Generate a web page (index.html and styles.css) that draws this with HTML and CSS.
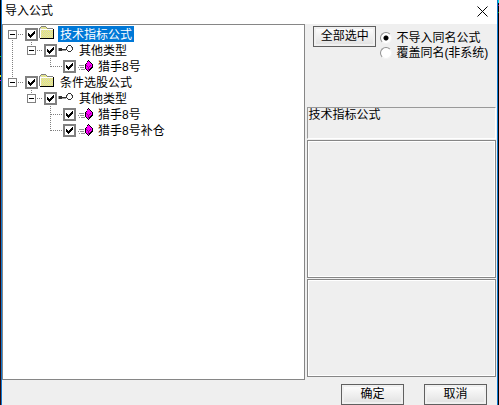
FILE: index.html
```html
<!DOCTYPE html>
<html lang="zh-CN">
<head>
    <meta charset="UTF-8">
    <meta name="viewport" content="width=device-width, initial-scale=1.0">
    <title>导入公式</title>
    <link rel="stylesheet" href="styles.css">
</head>
<body>
    <!-- Shared icons -->
    <svg class="icon-defs" width="0" height="0">
        <symbol id="icon-folder" viewBox="0 0 16 16">
            <path d="M1 2h1v-1h5v1h1v1h6v9h-13z" fill="#d0d0d0"/>
            <path d="M2 1.500h5M3 2.500h5M2 3.500h6M3 4.500h11M2 5.500h12M3 6.500h11M2 7.500h12M3 8.500h11M2 9.500h12M3 10.500h11M2 11.500h12" stroke="#f4f45a" stroke-dasharray="1 1"/>
            <path d="M2 0h5v1h-5zM1 1h1v1h-1zM7 1h1v1h-1zM0 2h1v10h-1zM8 2h6v1h-6z" fill="#808080"/>
            <path d="M1 3h13v1h-13zM1 4h1v8h-1z" fill="#fff"/>
            <path d="M14 3h1v10h-14v-1h13z" fill="#000"/>
        </symbol>
        <symbol id="icon-key" viewBox="0 0 16 16">
            <path d="M1 6h3v3h-3zM4 7h4v1h-4zM10 3h3v1h-3zM9 4h1v1h-1zM13 4h1v1h-1zM8 5h1v3h-1zM14 5h1v3h-1zM9 8h1v1h-1zM13 8h1v1h-1zM10 9h3v1h-3z" fill="#303030"/>
            <path d="M0 6h1v3h-1zM4 8h4v1h-4zM9 5h1v1h-1zM13 5h1v1h-1z" fill="#a0a0a0"/>
        </symbol>
        <symbol id="icon-formula" viewBox="0 0 16 16">
            <path d="M11 2h1v1h1v1h1v1h1v1h1v4h-1v1h-1v1h-1v1h-1v1h-1v-1h-1v-1h-1v-1h-1v-5h1v-1h1v-2h1z" fill="#000"/>
            <path d="M11 3h1v1h1v1h1v1h1v3h-1v1h-1v1h-1v2h-1v-1h-1v-1h-1v-5h1v-2h1z" fill="#ff00ff"/>
            <path d="M9 7h1v1h1v1h1v3h-1v-3h-1v-1h-1zM13 7h1v1h-1zM12 8h1v1h-1z" fill="#900090"/>
            <path d="M2 7h5v1h-5zM1 9h1v1h-1zM3 9h4v1h-4zM2 11h1v1h-1zM4 11h4v1h-4z" fill="#909090"/>
        </symbol>
    </svg>

    <header class="title-bar">
        <h1 class="title">导入公式</h1>
        <button class="close" type="button" aria-label="关闭">
            <svg width="11" height="11" viewBox="0 0 11 11"><path d="M0.500 0.500l10 10M10.500 0.500l-10 10" stroke="#000" fill="none"/></svg>
        </button>
    </header>

    <main class="content">
        <!-- Formula tree -->
        <div class="tree">
            <ul class="branch">
                <li class="node">
                    <div class="row">
                        <button class="toggle" type="button" aria-label="折叠"></button>
                        <span class="dots"></span>
                        <label class="item">
                            <input class="check" type="checkbox" checked>
                            <svg class="icon"><use href="#icon-folder"/></svg>
                            <span class="name selected">技术指标公式</span>
                        </label>
                    </div>
                    <ul class="branch">
                        <li class="node">
                            <div class="row">
                                <button class="toggle" type="button" aria-label="折叠"></button>
                                <span class="dots"></span>
                                <label class="item">
                                    <input class="check" type="checkbox" checked>
                                    <svg class="icon"><use href="#icon-key"/></svg>
                                    <span class="name">其他类型</span>
                                </label>
                            </div>
                            <ul class="branch">
                                <li class="node">
                                    <div class="row leaf">
                                        <span class="dots"></span>
                                        <label class="item">
                                            <input class="check" type="checkbox" checked>
                                            <svg class="icon"><use href="#icon-formula"/></svg>
                                            <span class="name">猎手8号</span>
                                        </label>
                                    </div>
                                </li>
                            </ul>
                        </li>
                    </ul>
                </li>
                <li class="node">
                    <div class="row">
                        <button class="toggle" type="button" aria-label="折叠"></button>
                        <span class="dots"></span>
                        <label class="item">
                            <input class="check" type="checkbox" checked>
                            <svg class="icon"><use href="#icon-folder"/></svg>
                            <span class="name">条件选股公式</span>
                        </label>
                    </div>
                    <ul class="branch">
                        <li class="node">
                            <div class="row">
                                <button class="toggle" type="button" aria-label="折叠"></button>
                                <span class="dots"></span>
                                <label class="item">
                                    <input class="check" type="checkbox" checked>
                                    <svg class="icon"><use href="#icon-key"/></svg>
                                    <span class="name">其他类型</span>
                                </label>
                            </div>
                            <ul class="branch">
                                <li class="node">
                                    <div class="row leaf">
                                        <span class="dots"></span>
                                        <label class="item">
                                            <input class="check" type="checkbox" checked>
                                            <svg class="icon"><use href="#icon-formula"/></svg>
                                            <span class="name">猎手8号</span>
                                        </label>
                                    </div>
                                </li>
                                <li class="node">
                                    <div class="row leaf">
                                        <span class="dots"></span>
                                        <label class="item">
                                            <input class="check" type="checkbox" checked>
                                            <svg class="icon"><use href="#icon-formula"/></svg>
                                            <span class="name">猎手8号补仓</span>
                                        </label>
                                    </div>
                                </li>
                            </ul>
                        </li>
                    </ul>
                </li>
            </ul>
        </div>

        <!-- Options and details -->
        <div class="side">
            <div class="options">
                <button class="btn" type="button">全部选中</button>
                <div class="radios">
                    <label class="choice"><input class="radio" type="radio" name="same-name" checked>不导入同名公式</label>
                    <label class="choice"><input class="radio" type="radio" name="same-name">覆盖同名(非系统)</label>
                </div>
            </div>
            <div class="summary">技术指标公式</div>
            <div class="pane pane-large"></div>
            <div class="pane pane-small"></div>
        </div>
    </main>

    <footer class="actions">
        <button class="btn" type="submit">确定</button>
        <button class="btn" type="button">取消</button>
    </footer>
</body>
</html>
```

FILE: styles.css
```css
*{
    box-sizing: border-box;
}
html{
    background: #000;
}
/* The window edge is blue, with the dark desktop showing beside it */
body{
    display: flex;
    flex-direction: column;
    min-height: 100vh;
    margin: 0;
    padding: 0 2px;
    background: linear-gradient(#000 56px, #00c000 56px 57px, #000 57px 75px, #e0e000 75px 77px, #000 77px 80px, #e000e0 80px 81px, #000 81px 180px, #300808 180px) left / 1px 100% no-repeat,
                linear-gradient(#00e0e0 3px, #000 3px 5px, #800080 5px 6px, #000 6px 12px, #00a000 12px 13px, #000 13px) right / 1px 100% no-repeat,
                #1078d0;
    color: #000;
    font: 12px/16px "Liberation Sans", "Noto Sans CJK SC", sans-serif;
}
button, input{
    margin: 0;
    padding: 0;
    font: inherit;
    color: inherit;
}
.icon-defs{
    position: absolute;
}
/*
* Title Bar
*/
.title-bar{
    display: flex;
    align-items: center;
    justify-content: space-between;
    height: 24px;
    padding: 0 9px 2px 3px;
    background: #fff;
}
.title{
    margin: 0;
    font-size: 12px;
    font-weight: normal;
}
.close{
    display: flex;
    border: 0;
    background: none;
}
/*
* Content
*/
.content{
    display: grid;
    grid-template-columns: 19fr 12fr;
    flex: 1;
    background: #efefef;
}
/*
* Tree
*/
.tree{
    padding: 1px 5px;
    border: 1px solid #868686;
    background: #fff;
}
.branch{
    margin: 0;
    padding: 0;
    list-style: none;
}
.branch .branch{
    padding-left: 19px;
}
.node{
    background: repeating-linear-gradient(#808080 0 1px, transparent 1px 2px) 4px 0 / 1px 100% no-repeat;
}
.node:last-child{
    background-size: 1px 9px;
}
.tree > .branch > .node:first-child{
    background-position: 4px 8px;
}
.row{
    display: flex;
    align-items: center;
    height: 16px;
}
.leaf{
    padding-left: 4px;
}
.toggle{
    width: 9px;
    height: 9px;
    border: 1px solid #808080;
    background: linear-gradient(#000, #000) center / 5px 1px no-repeat #fff;
}
.dots{
    width: 8px;
    height: 1px;
    background: repeating-linear-gradient(90deg, transparent 0 1px, #808080 1px 2px) 0 0 / 6px 1px no-repeat;
}
.leaf .dots{
    width: 13px;
    background-size: 12px 1px;
}
.item{
    display: flex;
    align-items: center;
}
.check{
    width: 13px;
    height: 13px;
    border: 2px solid #808080;
    appearance: none;
    background: #fff;
}
.check:checked{
    background: #fff url("data:image/svg+xml,%3Csvg xmlns='http://www.w3.org/2000/svg' width='9' height='9' shape-rendering='crispEdges'%3E%3Cpath d='M1 3h1v1h1v1h1v-1h1v-1h1v-1h1v-1h1v3h-1v1h-1v1h-1v1h-1v1h-1v-1h-1v-1h-1z'/%3E%3C/svg%3E") center no-repeat;
}
.icon{
    width: 16px;
    height: 16px;
    margin: 0 3px 0 1px;
}
.name{
    height: 16px;
    padding: 0 2px;
    line-height: 18px;
}
.selected{
    background: #0078d7;
    color: #fff;
}
/*
* Side Panel
*/
.side{
    display: flex;
    flex-direction: column;
    gap: 1px;
    padding: 0 1px 3px 2px;
}
.options{
    display: flex;
    gap: 4px;
    height: 82px;
    padding: 2px 0 0 6px;
}
.radios{
    padding-top: 4px;
}
.choice{
    display: flex;
    align-items: center;
    gap: 4px;
    height: 15px;
    white-space: nowrap;
}
.radio{
    width: 12px;
    height: 12px;
    border: 1px solid;
    border-color: #909090 #f4f4f4 #f4f4f4 #909090;
    border-radius: 50%;
    appearance: none;
    background: #fff;
}
.radio:checked{
    background: radial-gradient(circle, #000 2px, #fff 3px);
}
.summary{
    height: 32px;
    border: 1px solid;
    border-color: #999 #fff #fff #999;
    line-height: 14px;
}
.pane{
    border: 1px solid #868686;
    box-shadow: inset 0 0 0 1px #fff;
}
.pane-large{
    flex: 10;
}
.pane-small{
    flex: 7;
}
/*
* Buttons
*/
.btn{
    width: 63px;
    height: 21px;
    border: 1px solid #606060;
    background: linear-gradient(#fff, #e0e0e0);
    box-shadow: inset 0 0 0 2px #f0f0f0;
    line-height: 19px;
    white-space: nowrap;
}
.actions{
    display: flex;
    justify-content: flex-end;
    gap: 20px;
    padding: 4px 10px 0;
    background: #efefef;
}
```
